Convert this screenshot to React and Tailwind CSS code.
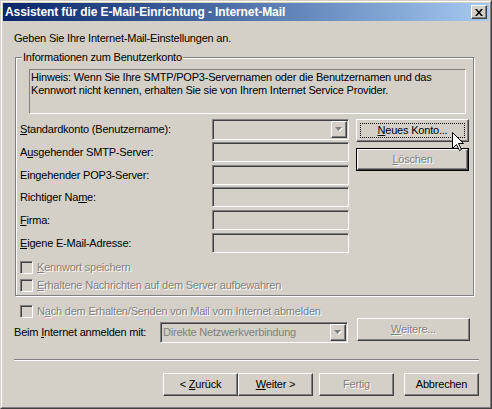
const raised = "border border-t-white border-l-white border-b-[#404040] border-r-[#404040] shadow-[inset_-1px_-1px_0_#808080] bg-[#d4d0c8]";
const sunken = "border border-t-[#808080] border-l-[#808080] border-b-white border-r-white shadow-[inset_1px_1px_0_#404040,inset_-1px_-1px_0_#d4d0c8] bg-[#d4d0c8]";
const grayText = "text-[#808080] [text-shadow:1px_1px_0_#fff]";

const Btn = ({ children, className = "", disabled, focus, def }) => {
  const face = (
    <div className={"h-full w-full flex items-center justify-center " + raised}>
      <div className={"flex items-center justify-center " + (focus ? "border border-dotted border-black w-[calc(100%-6px)] h-[calc(100%-6px)]" : "")}>
        <span className={disabled ? grayText : ""}>{children}</span>
      </div>
    </div>
  );
  if (def) return <div className={"border border-black " + className}>{face}</div>;
  return <div className={className}>{face}</div>;
};

const Arrow = ({ disabled }) => (
  <div className={"w-[16px] h-[17px] flex items-center justify-center " + raised}>
    <svg width="8" height="5" viewBox="0 0 8 5">
      {disabled && <polygon points="1,1 8,1 4.5,5" fill="#fff" />}
      <polygon points="0,0 7,0 3.5,4" fill={disabled ? "#808080" : "#000"} />
    </svg>
  </div>
);

const Combo = ({ className = "", text }) => (
  <div className={"flex items-center justify-between pl-[2px] pr-px " + sunken + " " + className}>
    <span className="text-[#808080]">{text}</span>
    <Arrow disabled />
  </div>
);

const Check = ({ children, className = "" }) => (
  <div className={"flex items-center h-[13px] " + className}>
    <div className={"w-[13px] h-[13px] shrink-0 " + sunken}></div>
    <span className={"ml-[4px] " + grayText}>{children}</span>
  </div>
);

const fields = [
  { label: <><u>S</u>tandardkonto (Benutzername):</>, combo: true, mt: "" },
  { label: <>A<u>u</u>sgehender SMTP-Server:</>, mt: "mt-[2px]" },
  { label: <>Eingehender POP3-Server:</>, mt: "mt-[3px]" },
  { label: <>Richtiger Na<u>m</u>e:</>, mt: "mt-[2px]" },
  { label: <><u>F</u>irma:</>, mt: "mt-[3px]" },
  { label: <><u>E</u>igene E-Mail-Adresse:</>, mt: "mt-[3px]" },
];

export default function App() {
  return (
    <div className="relative w-[492px] h-[409px] bg-[#d4d0c8] border border-t-[#d4d0c8] border-l-[#d4d0c8] border-b-[#404040] border-r-[#404040] font-['Liberation_Sans',Arial,sans-serif] text-[11px] leading-[13px] text-black tracking-[-0.2px]">
      <div className="h-full border border-t-white border-l-white border-b-[#808080] border-r-[#808080] p-px flex flex-col">
        <div className="h-[18px] shrink-0 flex items-center justify-between bg-linear-to-r from-[#0a246a] to-[#a6caf0] pl-[2px] pr-[2px]">
          <span className="text-white font-bold text-[12px] tracking-[-0.1px]">Assistent für die E-Mail-Einrichtung - Internet-Mail</span>
          <div className={"w-[16px] h-[14px] flex items-center justify-center " + raised}>
            <svg width="8" height="7" viewBox="0 0 8 7">
              <path d="M0,0h2l2,2.5l2,-2.5h2l-3,3.5l3,3.5h-2l-2,-2.5l-2,2.5h-2l3,-3.5z" fill="#000" />
            </svg>
          </div>
        </div>

        <div className="flex-1 flex flex-col pl-[11px] pr-[10px]">
          <div className="mt-[11px]">Geben Sie Ihre Internet-Mail-Einstellungen an.</div>

          <div className="relative mt-[12px] ml-px w-[459px] h-[239px] shrink-0 border border-[#808080] shadow-[inset_1px_1px_0_#fff,1px_1px_0_#fff] flex flex-col">
            <span className="absolute left-[6px] -top-[7px] px-px bg-[#d4d0c8]">Informationen zum Benutzerkonto</span>
            <div className="ml-[13px] mt-[11px] w-[437px] h-[45px] border border-t-[#808080] border-l-[#808080] border-b-white border-r-white pl-px pt-px">
              Hinweis: Wenn Sie Ihre SMTP/POP3-Servernamen oder die Benutzernamen und das Kennwort nicht kennen, erhalten Sie sie von Ihrem Internet Service Provider.
            </div>

            <div className="mt-[5px] flex pl-[4px]">
              <div className="flex flex-col">
                {fields.map((f, i) => (
                  <div key={i} className={"flex items-center " + f.mt}>
                    <div className="w-[192px]">{f.label}</div>
                    {f.combo ? (
                      <Combo className="w-[137px] h-[21px]" />
                    ) : (
                      <div className={"w-[137px] h-[20px] " + sunken}></div>
                    )}
                  </div>
                ))}
              </div>
              <div className="ml-[7px] flex flex-col">
                <Btn focus className="w-[113px] h-[23px]"><u>N</u>eues Konto...</Btn>
                <Btn def disabled className="w-[113px] h-[23px] mt-[6px]"><u>L</u>öschen</Btn>
              </div>
            </div>

            <Check className="ml-[4px] mt-[8px]"><u>K</u>ennwort speichern</Check>
            <Check className="ml-[4px] mt-[5px]"><u>E</u>rhaltene Nachrichten auf dem Server aufbewahren</Check>
          </div>

          <Check className="ml-[6px] mt-[9px]">N<u>a</u>ch dem Erhalten/Senden von Mail vom Internet abmelden</Check>

          <div className="flex items-start">
            <div className="w-[146px] mt-[8px]">Beim <u>I</u>nternet anmelden mit:</div>
            <Combo className="w-[188px] h-[21px] mt-[4px]" text="Direkte Netzwerkverbindung" />
            <Btn disabled className="ml-[9px] w-[113px] h-[23px]"><u>W</u>eitere...</Btn>
          </div>

          <div className="mt-[16px] h-[2px] border-t border-t-[#808080] border-b border-b-white"></div>

          <div className="mt-[12px] flex justify-end">
            <Btn className="w-[75px] h-[23px]">&lt; <u>Z</u>urück</Btn>
            <Btn className="w-[75px] h-[23px]"><u>W</u>eiter &gt;</Btn>
            <Btn disabled className="ml-[6px] w-[75px] h-[23px]">Fertig</Btn>
            <Btn className="ml-[10px] w-[75px] h-[23px]">Abbrechen</Btn>
          </div>
        </div>
      </div>

      <svg className="absolute left-[451px] top-[131px]" width="12" height="20" viewBox="0 0 12 20">
        <path d="M0.5,0.5 L0.5,16.5 L4.5,12.5 L7.5,18.5 L9.5,17.5 L6.5,11.5 L11.5,11.5 Z" fill="#fff" stroke="#000" strokeWidth="1" />
      </svg>
    </div>
  );
}
